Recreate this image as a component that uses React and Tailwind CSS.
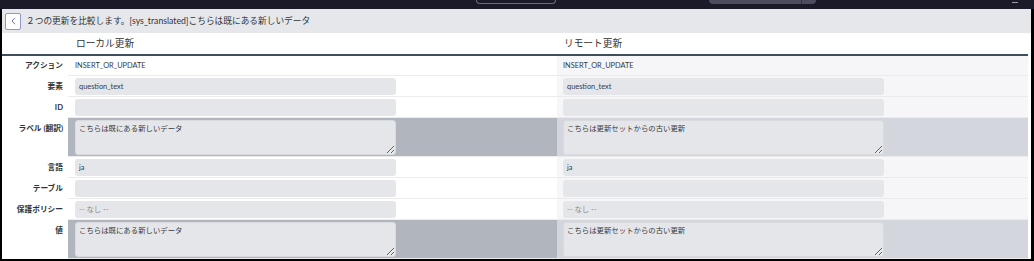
import React from "react";

const rows = [
  { label: "要素", type: "input", left: "question_text", right: "question_text" },
  { label: "ID", type: "input", left: "", right: "" },
  { label: "ラベル (翻訳)", type: "textarea", left: "こちらは既にある新しいデータ", right: "こちらは更新セットからの古い更新" },
  { label: "言語", type: "input", left: "ja", right: "ja" },
  { label: "テーブル", type: "input", left: "", right: "" },
  { label: "保護ポリシー", type: "input", left: "-- なし --", right: "-- なし --", ph: true },
  { label: "値", type: "textarea", left: "こちらは既にある新しいデータ", right: "こちらは更新セットからの古い更新" },
];

function Field({ type, value, ph }) {
  if (type === "textarea") {
    return (
      <textarea
        readOnly
        defaultValue={value}
        className="mt-[2px] block h-[35px] w-[321px] rounded-[3px] border border-[#d8dade] bg-[#e5e6e9] px-[3px] pt-[2px] text-[7.4px] leading-[11px] text-[#3a3a3a] outline-none"
      />
    );
  }
  return (
    <div
      className={
        "mt-[2px] flex h-[17px] w-[321px] items-center rounded-[3px] bg-[#e5e6e9] pl-[4px] text-[7.4px] " +
        (ph ? "text-[#8c8c8c]" : "text-[#3a3a3a]")
      }
    >
      {value}
    </div>
  );
}

export default function App() {
  return (
    <div className="h-[261px] w-[1034px] overflow-hidden bg-white font-['Lato','Noto_Sans_CJK_JP',sans-serif]">
      {/* top dark bar */}
      <div className="flex h-[9px] items-start bg-[#1a1a28]">
        <div className="ml-[476px] h-[4px] w-[80px] rounded-b-[6px] border-x border-b border-[#6b6b7a]" />
        <div className="ml-[153px] flex h-[4px] w-[107px] rounded-b-[4px] bg-[#4b4c5d]">
          <div className="ml-[92px] h-[4px] w-px bg-[#33344a]" />
        </div>
        <div className="ml-[196px] mt-[2px] h-px w-[6px] bg-[#9a9aa6]" />
      </div>

      <div className="flex h-[252px] flex-col border-b-2 border-l-2 border-r-[3px] border-black">
        {/* title header */}
        <div className="flex h-[24px] shrink-0 items-center gap-[5px] bg-[#e6e7ea] pl-[3px]">
          <div className="flex h-[17px] w-[16px] items-center justify-center rounded-[2px] border border-[#8e97cb] bg-white">
            <svg width="5" height="8" viewBox="0 0 5 8">
              <polyline points="4,0.8 1,4 4,7.2" fill="none" stroke="#6a72b2" strokeWidth="1" />
            </svg>
          </div>
          <span className="text-[8.7px] text-[#333]">
            ２つの更新を比較します。[sys_translated]こちらは既にある新しいデータ
          </span>
        </div>

        <div className="pr-[3px]">
          {/* column headings */}
          <div className="grid h-[21px] grid-cols-[66px_489px_471px] items-center text-[9.7px] text-[#333]">
            <div />
            <div className="pl-[8px]">ローカル更新</div>
            <div className="pl-[7px]">リモート更新</div>
          </div>
          <div className="h-[2px] bg-[#3f4e5c]" />

          {/* action row */}
          <div className="grid h-[20px] grid-cols-[66px_489px_471px]">
            <div className="flex items-center justify-end pr-[5px] text-[7.7px] font-bold text-[#333]">アクション</div>
            <div className="flex items-center border-b border-[#ececee] pl-[7px] text-[7.4px] text-[#3a3a3a]">INSERT_OR_UPDATE</div>
            <div className="flex items-center border-b border-[#eaeaed] bg-[#f6f6f8] pl-[6px] text-[7.4px] text-[#3a3a3a]">INSERT_OR_UPDATE</div>
          </div>

          {rows.map((r, i) => {
            const ta = r.type === "textarea";
            return (
              <div
                key={i}
                className={"grid grid-cols-[66px_489px_471px] " + (ta ? "h-[39px]" : "h-[21px]")}
              >
                <div
                  className={
                    "flex justify-end pr-[5px] text-[7.7px] font-bold text-[#333] " +
                    (ta ? "items-start pt-[5px]" : "items-center")
                  }
                >
                  {r.label}
                </div>
                <div
                  className={
                    "flex items-start border-b border-[#ececee] pl-[7px] " +
                    (ta ? "bg-[#b1b5bd]" : "bg-white")
                  }
                >
                  <Field type={r.type} value={r.left} ph={r.ph} />
                </div>
                <div
                  className={
                    "flex items-start border-b border-[#eaeaed] pl-[6px] " +
                    (ta ? "bg-[#d3d6dd]" : "bg-[#f6f6f8]")
                  }
                >
                  <Field type={r.type} value={r.right} ph={r.ph} />
                </div>
              </div>
            );
          })}
        </div>
      </div>
    </div>
  );
}
